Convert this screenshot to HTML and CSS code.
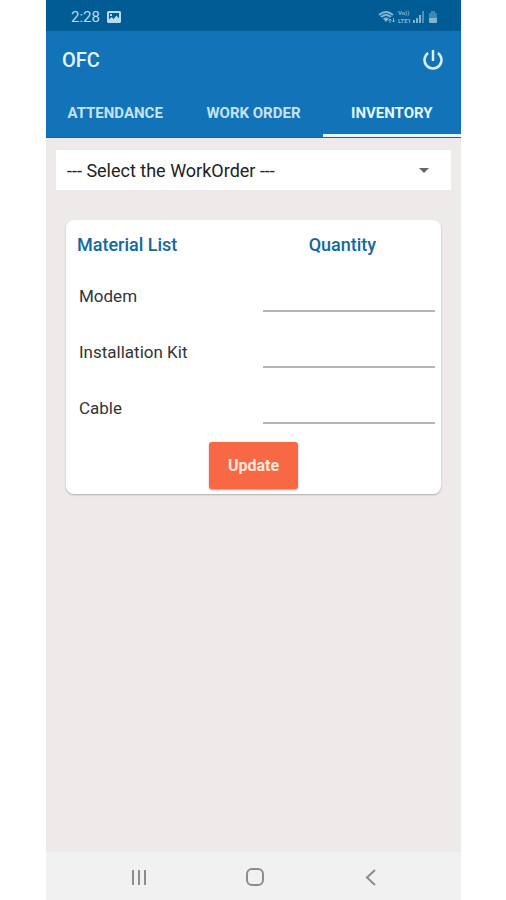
FILE: index.html
```html
<!DOCTYPE html>
<html lang="en">
<head>
    <meta charset="UTF-8">
    <meta name="viewport" content="width=device-width, initial-scale=1.0">
    <title>OFC - Inventory</title>
    <link rel="stylesheet" href="styles.css">
</head>
<body>
<div class="phone">
    <div class="status-bar">
        <span class="time">2:28</span>
        <svg class="picture-icon" width="14" height="12" viewBox="0 0 14 12">
            <path fill="currentColor" fill-rule="evenodd" d="M1.5 0h11Q14 0 14 1.500v9Q14 12 12.500 12h-11Q0 12 0 10.500v-9Q0 0 1.500 0zM2 2v6.500l2.500-2.500 2 2 3-3.500L12 7.500V2zM3 3h2v2H3z"/>
        </svg>
        <div class="status-icons">
            <svg width="18" height="14" viewBox="0 0 18 14" fill="none" stroke="currentColor">
                <path d="M1 5Q8 -1 15 5M3 7Q8 3 13 7" stroke-width="2"/>
                <path d="M5 8.500Q8 6.500 11 8.500L8 12z" fill="currentColor" stroke="none"/>
                <path d="M12 13V9M10.500 10.500L12 9l1.500 1.500M15.500 8v4M14 10.500l1.500 1.500 1.500-1.500"/>
            </svg>
            <span class="volte"><span>Vo))</span><span>LTE1</span></span>
            <svg width="12" height="12" viewBox="0 0 12 12" fill="currentColor">
                <path d="M0 9h2v3H0zM3 7h2v5H3zM6 4h2v8H6z"/>
                <path d="M9 0h2v12H9z" opacity=".6"/>
            </svg>
            <svg class="battery" width="8" height="12" viewBox="0 0 8 12" fill="currentColor">
                <path d="M2 0h4v2h2v5H0V2h2z" opacity=".5"/>
                <path d="M0 7h8v4q0 1-1 1H1q-1 0-1-1z"/>
            </svg>
        </div>
    </div>

    <header>
        <div class="title-bar">
            <h1>OFC</h1>
            <button class="power-btn" type="button" aria-label="Log out">
                <svg width="20" height="20" viewBox="0 0 20 20" fill="none" stroke="currentColor" stroke-width="2.500">
                    <path d="M10 0v11M5.200 3a8.500 8.500 0 1 0 9.600 0"/>
                </svg>
            </button>
        </div>
        <nav class="tabs">
            <a href="#attendance">ATTENDANCE</a>
            <a href="#work-order">WORK ORDER</a>
            <a href="#inventory" class="active">INVENTORY</a>
        </nav>
    </header>

    <main>
        <div class="select-box">
            <select id="work-order" aria-label="Work order">
                <option>--- Select the WorkOrder ---</option>
            </select>
            <svg class="arrow" width="10" height="5" viewBox="0 0 10 5"><path d="M0 0h10L5 5z" fill="#666"/></svg>
        </div>

        <form class="card">
            <table>
                <thead>
                    <tr>
                        <th class="material">Material List</th>
                        <th class="quantity">Quantity</th>
                    </tr>
                </thead>
                <tbody>
                    <tr>
                        <td><label for="modem">Modem</label></td>
                        <td class="field"><input id="modem" type="text" inputmode="numeric"></td>
                    </tr>
                    <tr>
                        <td><label for="kit">Installation Kit</label></td>
                        <td class="field"><input id="kit" type="text" inputmode="numeric"></td>
                    </tr>
                    <tr>
                        <td><label for="cable">Cable</label></td>
                        <td class="field"><input id="cable" type="text" inputmode="numeric"></td>
                    </tr>
                </tbody>
            </table>
            <button class="update-btn" type="button">Update</button>
        </form>
    </main>

    <div class="nav-bar">
        <button type="button" aria-label="Recent apps">
            <svg width="18" height="18" viewBox="0 0 18 18" fill="none" stroke="currentColor" stroke-width="2">
                <path d="M3 2v15M9 2v15M15 2v15"/>
            </svg>
        </button>
        <button type="button" aria-label="Home">
            <svg width="18" height="18" viewBox="0 0 18 18" fill="none" stroke="currentColor" stroke-width="2">
                <rect x="1" y="1" width="16" height="16" rx="5"/>
            </svg>
        </button>
        <button type="button" aria-label="Back">
            <svg width="18" height="18" viewBox="0 0 18 18" fill="none" stroke="currentColor" stroke-width="2">
                <path d="M13 2L5 9.500l8 7.500"/>
            </svg>
        </button>
    </div>
</div>
</body>
</html>
```
FILE: styles.css
```css
* {
    margin: 0;
    padding: 0;
    box-sizing: border-box;
}
body {
    background-color: #fff;
    font-family: Roboto, "Liberation Sans", sans-serif;
    font-size: 17px;
    color: #333;
}
button {
    font-family: inherit;
    border: none;
    background: none;
    cursor: pointer;
}
svg {
    display: block;
}
.phone {
    margin: 0 45px 0 46px;
    min-height: 100vh;
    display: flex;
    flex-direction: column;
    background-color: #edeae9;
}

/* status bar */
.status-bar {
    height: 31px;
    padding: 2px 24px 0 25px;
    display: flex;
    align-items: center;
    background-color: #015b94;
    color: #b5dcf0;
}
.time {
    font-size: 15px;
}
.picture-icon {
    margin-left: 7px;
}
.status-icons {
    margin-left: auto;
    display: flex;
    align-items: center;
    gap: 2px;
    color: #80b6d3;
}
.volte {
    display: flex;
    flex-direction: column;
    font-size: 6px;
    line-height: 8px;
    font-weight: 700;
}
.battery {
    margin-left: 2px;
}

/* header and tabs */
header {
    background-color: #1273b8;
    color: #e4f6ff;
}
.title-bar {
    height: 57px;
    padding: 0 18px 0 16px;
    display: flex;
    align-items: center;
    justify-content: space-between;
}
h1 {
    font-size: 20px;
    font-weight: 500;
}
.power-btn {
    color: #d8f1fc;
}
.tabs {
    display: flex;
    border-bottom: 1px solid #0d68a8;
}
.tabs a {
    flex: 1;
    height: 49px;
    line-height: 50px;
    text-align: center;
    font-size: 15px;
    font-weight: 700;
    color: #c3e3f5;
    text-decoration: none;
    white-space: nowrap;
}
.tabs .active {
    color: #e4f6ff;
    border-bottom: 3px solid #e4f6ff;
}

/* content */
main {
    flex: 1;
    padding: 12px 10px;
}
.select-box {
    display: grid;
    align-items: center;
    background-color: #fff;
}
.select-box select,
.arrow {
    grid-area: 1 / 1;
}
.select-box select {
    appearance: none;
    width: 100%;
    height: 40px;
    padding: 0 32px 0 11px;
    border: none;
    background: none;
    font-family: inherit;
    font-size: 18px;
    color: #222;
}
.arrow {
    justify-self: end;
    margin-right: 22px;
    pointer-events: none;
}
.card {
    display: flex;
    flex-direction: column;
    margin: 30px 10px 0;
    padding: 0 6px 5px;
    background-color: #fff;
    border-radius: 8px;
    box-shadow: 0 1px 2px rgba(0, 0, 0, 0.25);
}
table {
    width: 100%;
    border-collapse: collapse;
}
th {
    height: 48px;
    font-size: 18px;
    font-weight: 500;
    color: #13699f;
}
.material {
    width: 49%;
    padding-left: 5px;
    text-align: left;
}
td {
    height: 56px;
    padding-left: 7px;
}
.field {
    padding-left: 13px;
}
.field input {
    display: block;
    width: 100%;
    height: 31px;
    border: none;
    border-bottom: 2px solid #b5b5b5;
    background: none;
    font-family: inherit;
    font-size: 17px;
    color: #333;
}
.update-btn {
    align-self: center;
    margin-top: 6px;
    padding: 0 19px;
    height: 47px;
    border-radius: 3px;
    background-color: #f86845;
    box-shadow: 0 1px 2px rgba(0, 0, 0, 0.35);
    color: #ffe9dc;
    font-size: 16px;
    font-weight: 700;
}

/* bottom navigation */
.nav-bar {
    height: 48px;
    padding: 2px 32px 0 35px;
    display: flex;
    align-items: center;
    justify-content: space-around;
    background-color: #f1f1f1;
}
.nav-bar button {
    padding: 6px;
    color: #8c8c8c;
}
```
